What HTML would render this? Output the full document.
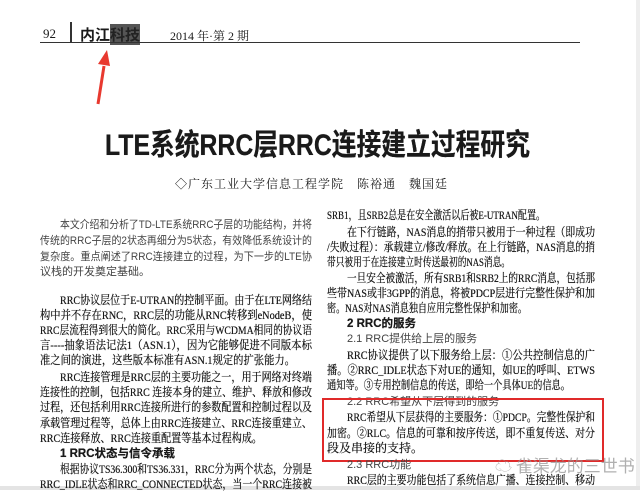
<!DOCTYPE html><html><head><meta charset="utf-8"><style>
body{margin:0;width:640px;height:490px;background:#fff;overflow:hidden;position:relative;font-family:"Liberation Serif","Noto Serif CJK SC",serif;color:#1a1a1a}
.a{position:absolute;white-space:nowrap}
.l{position:absolute;white-space:nowrap;font-size:12px;line-height:15px;text-shadow:0 0 .4px #000}
.l span{display:inline-block;transform-origin:0 0}
.L{left:40px;width:272px}.R{left:327px;width:268px}
.s{font-family:"Liberation Sans","Noto Sans CJK SC",sans-serif;color:#444;font-size:11px;text-shadow:none}
.h{font-family:"Liberation Sans","Noto Sans CJK SC",sans-serif;font-weight:bold;font-size:11.5px}
</style></head><body>
<div style="position:absolute;right:0;top:0;width:4px;height:490px;background:#eee"></div>
<div style="position:absolute;left:0;top:486px;width:640px;height:4px;background:#e4e4e4"></div>
<div class="a" style="left:43px;top:26px;font-size:13px">92</div>
<div style="position:absolute;left:70px;top:22px;width:2px;height:20px;background:#333"></div>
<div class="a" style="left:80px;top:24px;font-size:15px;font-weight:bold;font-family:'Noto Sans CJK SC',sans-serif">内江<span style="background:#555;color:#222">科技</span></div>
<div class="a" style="left:170px;top:27px;font-size:12px">2014 年·第 2 期</div>
<div style="position:absolute;left:40px;top:42px;width:540px;height:1px;background:#333"></div>
<svg style="position:absolute;left:90px;top:50px" width="25" height="60"><path d="M8 54 L14 16" stroke="#e8392f" stroke-width="3"/><path d="M8 14 L17 0 L20 16 Z" fill="#e8392f"/></svg>
<div class="l f" style="left:105px;top:128px;width:425px;line-height:36px;font-size:30px;font-weight:bold;font-family:'Liberation Sans','Noto Sans CJK SC',sans-serif"><span>LTE系统RRC层RRC连接建立过程研究</span></div>
<div class="a" style="left:175px;top:175px;font-size:12px;letter-spacing:1px">◇广东工业大学信息工程学院　陈裕通　魏国廷</div>
<div class="l L s f" style="top:218px;left:60px;width:252px"><span>本文介绍和分析了TD-LTE系统RRC子层的功能结构，并将</span></div>
<div class="l L s f" style="top:234px"><span>传统的RRC子层的2状态再细分为5状态，有效降低系统设计的</span></div>
<div class="l L s f" style="top:250px"><span>复杂度。重点阐述了RRC连接建立的过程，为下一步的LTE协</span></div>
<div class="l L s" style="top:265px"><span>议栈的开发奠定基础。</span></div>
<div class="l L f" style="top:293px;left:60px;width:252px"><span>RRC协议层位于E-UTRAN的控制平面。由于在LTE网络结</span></div>
<div class="l L f" style="top:308px"><span>构中并不存在RNC，RRC层的功能从RNC转移到eNodeB，使</span></div>
<div class="l L f" style="top:323px"><span>RRC层流程得到很大的简化。RRC采用与WCDMA相同的协议语</span></div>
<div class="l L f" style="top:338px"><span>言----抽象语法记法1（ASN.1），因为它能够促进不同版本标</span></div>
<div class="l L f" style="top:353px;width:255px"><span>准之间的演进，这些版本标准有ASN.1规定的扩张能力。</span></div>
<div class="l L f" style="top:370px;left:60px;width:252px"><span>RRC连接管理是RRC层的主要功能之一，用于网络对终端</span></div>
<div class="l L f" style="top:385px"><span>连接性的控制，包括RRC 连接本身的建立、维护、释放和修改</span></div>
<div class="l L f" style="top:400px"><span>过程，还包括利用RRC连接所进行的参数配置和控制过程以及</span></div>
<div class="l L f" style="top:416px"><span>承载管理过程等，总体上由RRC连接建立、RRC连接重建立、</span></div>
<div class="l L f" style="top:431px;width:222px"><span>RRC连接释放、RRC连接重配置等基本过程构成。</span></div>
<div class="l L h" style="top:447px;left:60px"><span>1 RRC状态与信令承载</span></div>
<div class="l L f" style="top:462px;left:60px;width:252px"><span>根据协议TS36.300和TS36.331，RRC分为两个状态，分别是</span></div>
<div class="l L f" style="top:477px"><span>RRC_IDLE状态和RRC_CONNECTED状态，当一个RRC连接被</span></div>
<div class="l R f" style="top:208px;width:218px"><span>SRB1，且SRB2总是在安全激活以后被E-UTRAN配置。</span></div>
<div class="l R f" style="top:225px;left:347px;width:248px"><span>在下行链路，NAS消息的捎带只被用于一种过程（即成功</span></div>
<div class="l R f" style="top:240px"><span>/失败过程）：承载建立/修改/释放。在上行链路，NAS消息的捎</span></div>
<div class="l R f" style="top:255px;width:183px"><span>带只被用于在连接建立时传送最初的NAS消息。</span></div>
<div class="l R f" style="top:271px;left:347px;width:248px"><span>一旦安全被激活，所有SRB1和SRB2上的RRC消息，包括那</span></div>
<div class="l R f" style="top:286px"><span>些带NAS或非3GPP的消息，将被PDCP层进行完整性保护和加</span></div>
<div class="l R f" style="top:301px;width:200px"><span>密。NAS对NAS消息独自应用完整性保护和加密。</span></div>
<div class="l R h" style="top:317px;left:347px"><span>2 RRC的服务</span></div>
<div class="l R s" style="top:332px;left:347px"><span>2.1 RRC提供给上层的服务</span></div>
<div class="l R f" style="top:348px;left:347px;width:248px"><span>RRC协议提供了以下服务给上层：①公共控制信息的广</span></div>
<div class="l R f" style="top:363px"><span>播。②RRC_IDLE状态下对UE的通知，如UE的呼叫、ETWS</span></div>
<div class="l R f" style="top:378px;width:243px"><span>通知等。③专用控制信息的传送，即给一个具体UE的信息。</span></div>
<div class="l R s" style="top:395px;left:347px"><span>2.2 RRC希望从下层得到的服务</span></div>
<div class="l R f" style="top:410px;left:347px;width:248px"><span>RRC希望从下层获得的主要服务：①PDCP。完整性保护和</span></div>
<div class="l R f" style="top:426px"><span>加密。②RLC。信息的可靠和按序传送，即不重复传送、对分</span></div>
<div class="l R" style="top:441px"><span>段及串接的支持。</span></div>
<div style="position:absolute;left:322px;top:398px;width:278px;height:60px;border:2px solid #e02a2a"></div>
<div class="l R s" style="top:458px;left:347px"><span>2.3 RRC功能</span></div>
<div class="l R f" style="top:473px;left:347px;width:248px"><span>RRC层的主要功能包括了系统信息广播、连接控制、移动</span></div>
<div class="a" style="left:495px;top:452px;font-size:17px;color:rgba(150,150,150,.75);font-family:'Noto Sans CJK SC',sans-serif">☁ 雀渠龙的三世书</div>
<script>
document.querySelectorAll('.f').forEach(function(d){var s=d.firstElementChild;var w=s.getBoundingClientRect().width;var W=d.clientWidth;if(w>0)s.style.transform='scaleX('+(W/w)+')';});
</script>
</body></html>
